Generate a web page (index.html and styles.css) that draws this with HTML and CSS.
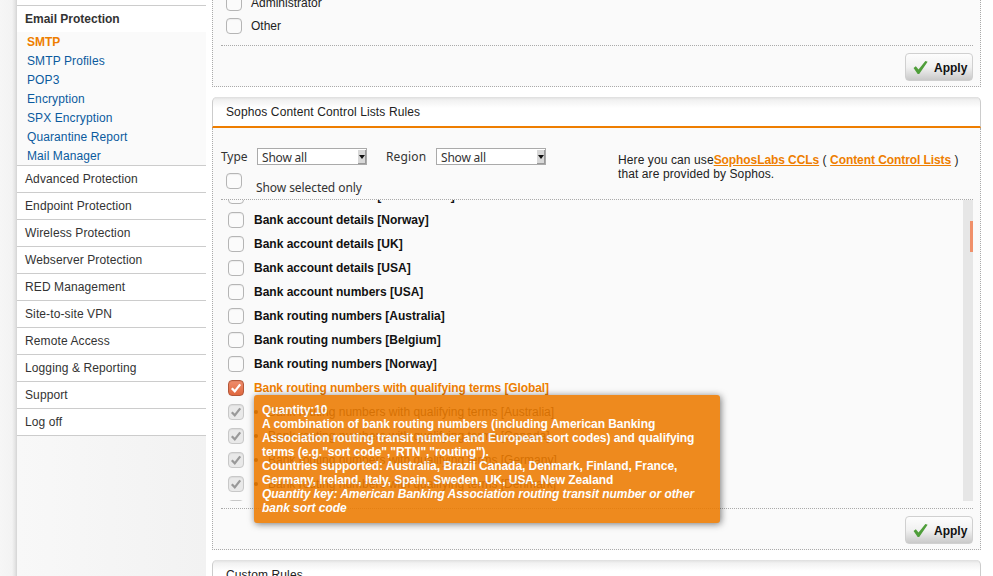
FILE: index.html
```
<!DOCTYPE html>
<html lang="en">
<head>
<meta charset="utf-8">
<title>Email Protection - SMTP</title>
<link rel="stylesheet" href="styles.css">
</head>
<body>
<svg class="defs" width="0" height="0" aria-hidden="true">
  <symbol id="tick" viewBox="0 0 16 16"><path d="M3.2 8.2 6.6 11.8 12.8 3.8" fill="none" stroke="currentColor" stroke-width="2.6"/></symbol>
  <symbol id="green" viewBox="0 0 16 16"><path d="M.6 8.6 3 6.6 5.9 10 13.2 1 15.6 1.8 6.6 15 5 15Z" fill="#4f9e3a"/></symbol>
</svg>
<div class="strip"></div>
<nav class="sidebar">
  <div class="nav-top"></div>
  <div class="nav-item nav-current">Email Protection</div>
  <ul class="subnav">
    <li class="sub-active">SMTP</li>
    <li>SMTP Profiles</li>
    <li>POP3</li>
    <li>Encryption</li>
    <li>SPX Encryption</li>
    <li>Quarantine Report</li>
    <li>Mail Manager</li>
  </ul>
  <div class="nav-item">Advanced Protection</div>
  <div class="nav-item">Endpoint Protection</div>
  <div class="nav-item">Wireless Protection</div>
  <div class="nav-item">Webserver Protection</div>
  <div class="nav-item">RED Management</div>
  <div class="nav-item">Site-to-site VPN</div>
  <div class="nav-item">Remote Access</div>
  <div class="nav-item">Logging &amp; Reporting</div>
  <div class="nav-item">Support</div>
  <div class="nav-item">Log off</div>
</nav>
<main class="main">
  <section class="panel panel-first">
    <div class="panel-body">
      <div class="opt"><span class="box"></span>Administrator</div>
      <div class="opt"><span class="box"></span>Other</div>
      <div class="actions">
        <button class="apply" type="button"><svg class="apply-icon"><use href="#green"/></svg>Apply</button>
      </div>
    </div>
  </section>

  <section class="panel">
    <header class="panel-head panel-head-active">Sophos Content Control Lists Rules</header>
    <div class="panel-body">
      <div class="filters">
        <div class="filter-left">
          <div class="filter-row">
            <span class="filter-label">Type</span>
            <span class="select-wrap"><select class="select"><option>Show all</option></select><i class="select-arrow"></i></span>
            <span class="filter-label filter-label-region">Region</span>
            <span class="select-wrap"><select class="select"><option>Show all</option></select><i class="select-arrow"></i></span>
          </div>
          <div class="selected-only"><span class="box"></span><span class="selected-text">Show selected only</span></div>
        </div>
        <p class="info">Here you can use<a href="#">SophosLabs CCLs</a> ( <a href="#">Content Control Lists</a> ) that are provided by Sophos.</p>
      </div>
      <div class="list-wrap">
        <div class="list">
          <div class="list-inner">
            <div class="row"><span class="box"></span>Bank account details [Netherlands]</div>
            <div class="row"><span class="box"></span>Bank account details [Norway]</div>
            <div class="row"><span class="box"></span>Bank account details [UK]</div>
            <div class="row"><span class="box"></span>Bank account details [USA]</div>
            <div class="row"><span class="box"></span>Bank account numbers [USA]</div>
            <div class="row"><span class="box"></span>Bank routing numbers [Australia]</div>
            <div class="row"><span class="box"></span>Bank routing numbers [Belgium]</div>
            <div class="row"><span class="box"></span>Bank routing numbers [Norway]</div>
            <div class="row row-on"><span class="box box-on"><svg class="tick"><use href="#tick"/></svg></span>Bank routing numbers with qualifying terms [Global]</div>
            <div class="row row-sub"><span class="box box-off"><svg class="tick"><use href="#tick"/></svg></span><span class="dot"></span>Bank routing numbers with qualifying terms [Australia]</div>
            <div class="row row-sub"><span class="box box-off"><svg class="tick"><use href="#tick"/></svg></span><span class="dot"></span>Bank routing numbers with qualifying terms [Canada]</div>
            <div class="row row-sub"><span class="box box-off"><svg class="tick"><use href="#tick"/></svg></span><span class="dot"></span>Bank routing numbers with qualifying terms [Germany]</div>
            <div class="row row-sub"><span class="box box-off"><svg class="tick"><use href="#tick"/></svg></span><span class="dot"></span>Bank routing numbers with qualifying terms [Denmark]</div>
            <div class="row row-sub"><span class="box box-off"></span></div>
          </div>
        </div>
        <div class="track"><div class="thumb"></div></div>
      </div>
      <div class="actions">
        <button class="apply" type="button"><svg class="apply-icon"><use href="#green"/></svg>Apply</button>
      </div>
      <div class="tooltip">
        Quantity:10<br>
        A combination of bank routing numbers (including American Banking<br>
        Association routing transit number and European sort codes) and qualifying<br>
        terms (e.g."sort code","RTN","routing").<br>
        Countries supported: Australia, Brazil Canada, Denmark, Finland, France,<br>
        Germany, Ireland, Italy, Spain, Sweden, UK, USA, New Zealand<br>
        <em>Quantity key: American Banking Association routing transit number or other<br>
        bank sort code</em>
      </div>
    </div>
  </section>

  <section class="panel">
    <header class="panel-head panel-head-plain">Custom Rules</header>
  </section>
</main>
</body>
</html>
```
FILE: styles.css
```
* { box-sizing: border-box; }
html, body { margin: 0; padding: 0; }
body {
  width: 993px;
  height: 576px;
  overflow: hidden;
  display: flex;
  align-items: flex-start;
  background: #fff;
  font: 12px/14px "Liberation Sans", Arial, sans-serif;
  color: #222;
}
.defs { position: absolute; }

.strip {
  width: 17px;
  height: 576px;
  flex: none;
  background: linear-gradient(to right, #f6f6f6 0, #f3f3f3 12px, #e4e4e4 15px, #d4d4d4 17px);
}
.sidebar {
  width: 189px;
  height: 576px;
  flex: none;
  background: linear-gradient(to right, #f8f8f8, #f2f2f2);
  color: #333;
}
.nav-top { height: 6px; background: #fff; border-bottom: 1px solid #ccc; }
.nav-item {
  height: 27px;
  padding: 0 8px;
  line-height: 26px;
  background: #fff;
  border-bottom: 1px solid #ccc;
  letter-spacing: .11px;
}
.nav-current {
  height: 26px;
  line-height: 27px;
  font-weight: bold;
  border-bottom: 0;
  letter-spacing: 0;
}
.subnav {
  list-style: none;
  margin: 0;
  padding: 1px 0 0 10px;
  height: 134px;
  background: #fafafa;
  border-bottom: 1px solid #ccc;
  color: #0b5a9e;
  letter-spacing: .1px;
}
.subnav li { height: 19px; line-height: 19px; }
.subnav .sub-active { color: #ee7e00; font-weight: bold; letter-spacing: 0; }

.main {
  width: 769px;
  flex: none;
  margin-left: 6px;
  margin-top: -21px;
  display: flex;
  flex-direction: column;
  gap: 10px;
}
.panel-body {
  position: relative;
  padding: 0 7px 5px 8px;
  background: #fafafa;
  border: 1px dotted #aaa;
  border-top: 0;
}
.panel-first .panel-body { padding-top: 12px; }
.panel-head {
  height: 31px;
  padding: 0 13px;
  line-height: 31px;
  background: linear-gradient(to bottom, #dedede 0, #f1f1f1 3px, #fff 11px);
  border: 1px solid #ccc;
  border-bottom: 0;
  border-top: 0;
  border-radius: 5px 5px 0 0;
  color: #222;
  letter-spacing: .12px;
}
.panel-head-active { border-bottom: 2px solid #ee7e00; }

.opt {
  display: flex;
  align-items: center;
  height: 23px;
  padding-left: 5px;
}
.opt .box { margin-right: 9px; }
.box {
  flex: none;
  display: block;
  width: 16px;
  height: 16px;
  background: #fbfbfb;
  border: 1px solid #b5b5b5;
  border-radius: 4px;
  box-shadow: inset 0 1px 1px rgba(0,0,0,.06);
}
.box-on {
  background: linear-gradient(to bottom, #ef8d6d, #e0683e);
  border-color: #b4583a;
  color: #fff;
}
.box-off {
  background: #e9e9e9;
  border-color: #c8c8c8;
  color: #999;
}
.tick { display: block; width: 14px; height: 14px; }

.actions {
  display: flex;
  justify-content: flex-end;
  padding-top: 7px;
  border-top: 1px dotted #aaa;
}
.panel-first .actions { margin-top: 8px; }
.apply {
  display: flex;
  align-items: center;
  width: 68px;
  height: 28px;
  padding: 2px 0 0 7px;
  background: linear-gradient(to bottom, #fdfdfd 0, #f1f1f1 50%, #c9c9c9 100%);
  border: 1px solid #d0d0d0;
  border-radius: 4px;
  font: bold 12px "Liberation Sans", Arial, sans-serif;
  color: #111;
}
.apply-icon { width: 15px; height: 15px; margin: -2px 6px 0 0; flex: none; }

.filters {
  display: flex;
  height: 72px;
  padding-top: 20px;
  border-bottom: 1px dotted #aaa;
}
.filter-left { width: 397px; flex: none; font-family: "Noto Sans", sans-serif; color: #333; letter-spacing: -.08px; }
.filter-row { display: flex; align-items: center; height: 17px; }
.filter-label { width: 36px; flex: none; }
.filter-label-region { width: 50px; margin-left: 19px; letter-spacing: .15px; }
.select-wrap { position: relative; display: block; width: 110px; height: 17px; }
.select {
  display: block;
  width: 110px;
  height: 17px;
  padding: 0 0 0 4px;
  margin: 0;
  appearance: none;
  background: #fff;
  border: 1px solid #aaa;
  border-radius: 0;
  font: 12px "Noto Sans", sans-serif;
  letter-spacing: -.2px;
  color: #333;
}
.select-arrow {
  position: absolute;
  right: 1px;
  top: 2px;
  width: 8px;
  height: 14px;
  background: #d8d8d8;
  border-right: 1px solid #999;
  border-bottom: 1px solid #999;
}
.select-arrow::after {
  content: "";
  position: absolute;
  left: 1px;
  top: 5px;
  border: 3px solid transparent;
  border-top: 4px solid #111;
  border-bottom: 0;
}
.selected-only { display: flex; height: 18px; margin-top: 8px; padding-left: 5px; }
.selected-text { margin-left: 14px; padding-top: 8px; }
.info { margin: 5px 0 0; width: 348px; color: #222; letter-spacing: .1px; }
.info a { color: #ee7e00; font-weight: bold; letter-spacing: -.08px; }

.list-wrap { display: flex; height: 301px; justify-content: space-between; margin-bottom: 7px; }
.list { width: 740px; overflow: hidden; }
.list-inner { margin-top: -16px; }
.row {
  display: flex;
  align-items: center;
  height: 24px;
  padding-left: 7px;
  font-weight: bold;
  color: #111;
}
.row .box { margin-right: 10px; }
.row-on { color: #ee7e00; letter-spacing: -.1px; }
.row-sub { font-weight: normal; color: #222; }
.dot { width: 4px; height: 4px; margin-right: 10px; margin-left: 0; border-radius: 50%; background: #222; flex: none; }
.track { width: 10px; height: 301px; flex: none; background: #e6e6e6; position: relative; }
.thumb { position: absolute; right: 0; top: 21px; width: 3px; height: 31px; background: #f0906a; }

.tooltip {
  position: absolute;
  left: 41px;
  top: 267px;
  width: 466px;
  height: 128px;
  padding: 8px;
  background: #ed7b00;
  border-radius: 3px;
  box-shadow: 1px 1px 7px rgba(0,0,0,.6);
  opacity: .88;
  color: #fff;
  font-weight: bold;
  white-space: nowrap;
  letter-spacing: -.05px;
}
```
